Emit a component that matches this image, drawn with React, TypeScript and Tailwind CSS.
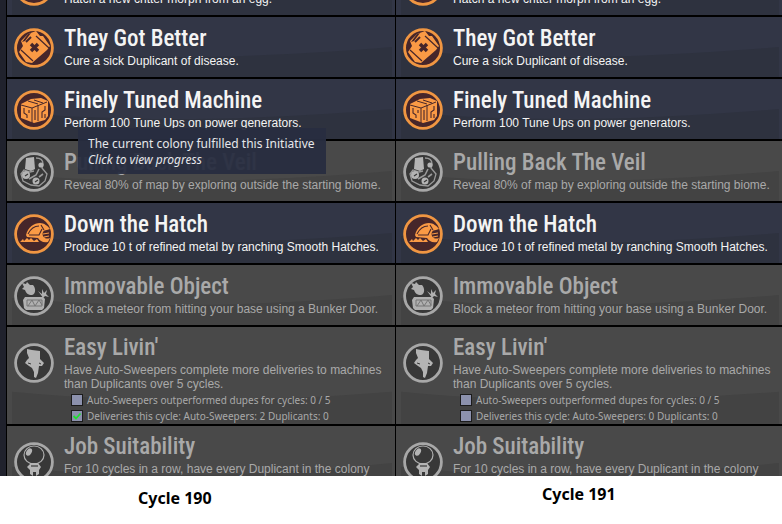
import { ReactNode } from "react";
import clsx from "clsx";

type Requirement = { label: string; done: boolean };

type Initiative = {
    id: string;
    title?: string;
    description: string;
    icon: ReactNode;
    achieved: boolean;
    tall?: boolean;
    requirements?: Requirement[];
};

const MedicineArt = () => (
    <>
        <path d="M5 24 L9 18 L7 13 L14 6 L22 3 L26 8 L29 8 L36 18 L33 22 L18 35 L12 34Z" fill="#fa9a45" />
        <path d="M8 14 L14 6 L17 5 L11 13Z" fill="#46262a" />
        <path d="M12 14 L17 9" stroke="#46262a" strokeWidth="2" />
        <path d="M7 22 L19 33 M22 8 L35 20" stroke="#46262a" strokeWidth="1.2" />
        <path d="M17 16 L24 23 M24 16 L17 23" stroke="#46262a" strokeWidth="3.4" />
    </>
);

const MachineArt = () => (
    <>
        <path d="M7 14 L17 9 L27 8 L34 11 L34 26 L31 30 L20 33 L7 28Z" fill="#fa9a45" />
        <path d="M7 15 L18 18 L33 12 M18 18 V33 M14 11 L24 14 M20 10 L29 13 M24 15 V31" stroke="#46262a" strokeWidth="1" fill="none" />
        <path d="M10 18 V23 L13 25 V28 M15 20 V23 M21 20 V30 M31 16 V20 L28 22 V28 M31 24 V28" stroke="#46262a" strokeWidth="1.1" fill="none" />
    </>
);

const MaskArt = () => (
    <>
        <path d="M12 6 L20 5 L21 17 L17 19 L11 17Z" fill="#b4b4b4" />
        <path d="M22 6 C26 6 29 8 29 12 L28 16 L33 22 L31 29 L25 34 L17 33 L9 29 L7 22 L10 18 L16 20 L20 19" stroke="#9a9a9a" strokeWidth="1.3" fill="none" />
        <circle cx="12" cy="23" r="4" fill="#b4b4b4" />
        <circle cx="22" cy="29" r="3.5" fill="#b4b4b4" />
        <circle cx="27" cy="13" r="2.6" fill="#b4b4b4" />
        <path d="M15 27 L22 23 L25 17 M25 25 L29 22" stroke="#9a9a9a" strokeWidth="1.6" fill="none" />
        <path d="M11 24 L14 22 M21 30 L24 28" stroke="#383838" strokeWidth="1.2" />
    </>
);

const HatchArt = () => (
    <>
        <path d="M12 21 C14 13 20 9 26 9 C30 9 34 12 36 15 L33 16 C29 16 28 19 29 22 C31 25 33 25 36 24 L34 28 C29 29 26 27 24 24 L13 23Z" fill="#fa9a45" />
        <path d="M14 20 C17 14 21 12 25 12 M15 21 H25 L28 15 M27 11 L30 16" stroke="#46262a" strokeWidth="1.1" fill="none" />
        <path d="M6 28 L9 25 L10 27 L13 24 L15 26 L17 24 L20 27 L23 25 L25 28Z" fill="#fa9a45" />
        <path d="M29 20 L35 19 M30 23 L35 22" stroke="#fa9a45" strokeWidth="1.1" />
    </>
);

const MeteorArt = () => (
    <>
        <path d="M8 7 L12 8 L13 6 L16 9 L19 9 C22 12 22 18 18 19 C14 19 12 17 11 14 L8 13 L10 11Z" fill="#b0b0b0" />
        <path d="M24 15 L28 18 L28 13 L30 17 L33 14 L32 18 L35 21 L31 20 L29 22 L27 19Z" fill="#b0b0b0" />
        <path d="M11 21 H29 L31 23 L30 32 L28 34 H12 L10 32 L9 24Z" fill="#b0b0b0" />
        <path d="M13 24 H28 V30 H13Z M14 30 L18 24 L21 30 L25 24 L28 29" stroke="#757575" strokeWidth="1" fill="none" />
    </>
);

const SweeperArt = () => (
    <>
        <path d="M13 6 L18 7 L26 8 L26 16 L30 20 L28 23 H25 L24 30 L22 35 L20 34 L20 29 L18 25 L15 23 L11 20 L13 17 L15 15 L13 10Z" fill="#b4b4b4" />
        <path d="M14 20 L17 21 M25 20 L27 21" stroke="#383838" strokeWidth="1" />
    </>
);

const AstronautArt = () => (
    <>
        <ellipse cx="20" cy="13" rx="10" ry="9" fill="#383838" stroke="#b0b0b0" strokeWidth="1.2" />
        <ellipse cx="15" cy="10" rx="2.6" ry="4" fill="#b4b4b4" transform="rotate(30 15 10)" />
        <path d="M17 21 H24 L27 25 L25 28 V32 L22 34 V30 H19 V34 L16 32 V28 L13 25Z" fill="#b4b4b4" />
        <path d="M17 24 H24" stroke="#383838" strokeWidth="1.2" />
    </>
);

const cycle190: Initiative[] = [
    { id: "morph", description: "Hatch a new critter morph from an egg.", icon: null, achieved: true },
    { id: "better", title: "They Got Better", description: "Cure a sick Duplicant of disease.", icon: <MedicineArt />, achieved: true },
    { id: "machine", title: "Finely Tuned Machine", description: "Perform 100 Tune Ups on power generators.", icon: <MachineArt />, achieved: true },
    { id: "veil", title: "Pulling Back The Veil", description: "Reveal 80% of map by exploring outside the starting biome.", icon: <MaskArt />, achieved: false },
    { id: "hatch", title: "Down the Hatch", description: "Produce 10 t of refined metal by ranching Smooth Hatches.", icon: <HatchArt />, achieved: true },
    { id: "object", title: "Immovable Object", description: "Block a meteor from hitting your base using a Bunker Door.", icon: <MeteorArt />, achieved: false },
    {
        id: "livin",
        title: "Easy Livin'",
        description: "Have Auto-Sweepers complete more deliveries to machines than Duplicants over 5 cycles.",
        icon: <SweeperArt />,
        achieved: false,
        tall: true,
        requirements: [
            { label: "Auto-Sweepers outperformed dupes for cycles: 0 / 5", done: false },
            { label: "Deliveries this cycle: Auto-Sweepers: 2 Duplicants: 0", done: true },
        ],
    },
    { id: "job", title: "Job Suitability", description: "For 10 cycles in a row, have every Duplicant in the colony", icon: <AstronautArt />, achieved: false, tall: true },
];

const cycle191: Initiative[] = cycle190.map((item) =>
    item.id === "livin"
        ? {
            ...item,
            requirements: [
                { label: "Auto-Sweepers outperformed dupes for cycles: 0 / 5", done: false },
                { label: "Deliveries this cycle: Auto-Sweepers: 0 Duplicants: 0", done: false },
            ],
        }
        : item
);

const Badge = ({ achieved, children }: { achieved: boolean; children: ReactNode }) => (
    <svg viewBox="0 0 40 40" className="size-10 shrink-0" aria-hidden="true">
        <circle cx="20" cy="20" r="18.5" fill={achieved ? "#46262a" : "#383838"} />
        {children}
        <circle cx="20" cy="20" r="18.4" fill="none" stroke={achieved ? "#f09642" : "#a8a8a8"} strokeWidth="2.8" />
    </svg>
);

const Tooltip = () => (
    <div role="tooltip" className="absolute left-[71px] top-[49px] z-10 w-[248px] bg-[#282d40]/95 px-[10px] pb-[6px] pt-2 font-['Noto_Sans',sans-serif] text-[12px] leading-4 text-[#e6e7ea]">
        <p>The current colony fulfilled this Initiative</p>
        <p className="italic">Click to view progress</p>
    </div>
);

const InitiativeRow = ({ item, tooltip }: { item: Initiative; tooltip?: boolean }) => (
    <li
        className={clsx(
            "relative flex shrink-0 items-start border-b-2 border-black pl-[7px]",
            item.requirements ? "h-[99px]" : item.tall ? "h-[76px]" : "h-[62px]",
            item.achieved ? "bg-[#323646] text-[#f4f4f4]" : "bg-[#494949] text-[#a9a9a9]"
        )}
    >
        <svg viewBox="0 0 380 60" preserveAspectRatio="none" className="absolute inset-y-0 left-[5px] h-full w-[calc(100%-8px)]" aria-hidden="true">
            <path d={item.requirements ? "M0 40 C130 48 260 46 380 40 V60 H0Z" : "M0 33 C130 45 260 40 380 30 V60 H0Z"} fill={item.achieved ? "#2e323f" : "#434343"} />
        </svg>
        <div className={clsx("relative", item.tall ? "pt-4" : "pt-[11px]")}>
            <Badge achieved={item.achieved}>{item.icon}</Badge>
        </div>
        <div className={clsx("relative flex h-full min-w-0 flex-1 flex-col pl-[10px]", item.tall ? "pt-[7px]" : "pt-2")}>
            {/* the name of the topmost entry is scrolled out of view */}
            <h2 className="h-7 whitespace-nowrap font-['Roboto_Condensed','Roboto',sans-serif] text-[23px] font-medium leading-7">{item.title}</h2>
            <p className="pt-px font-['Liberation_Sans',sans-serif] text-[12px] leading-[14px]">{item.description}</p>
            {item.requirements && (
                <ul className="pl-[7px] pt-px">
                    {item.requirements.map((req) => (
                        <li key={req.label}>
                            <label className="flex h-4 items-center gap-1 font-['Noto_Sans',sans-serif] text-[10px] leading-4">
                                <span className="relative flex size-3">
                                    <input type="checkbox" checked={req.done} readOnly className="size-3 appearance-none border border-[#1c1c1c] bg-[#8c91ad]" />
                                    {req.done && (
                                        <svg viewBox="0 0 12 12" className="absolute inset-0 size-3" aria-hidden="true">
                                            <path d="M2.5 6 L5 8.5 L9.5 3.5" stroke="#1fe02f" strokeWidth="1.8" fill="none" />
                                        </svg>
                                    )}
                                </span>
                                {req.label}
                            </label>
                        </li>
                    ))}
                </ul>
            )}
        </div>
        {tooltip && <Tooltip />}
    </li>
);

const InitiativeList = ({ items, hovered }: { items: Initiative[]; hovered?: string }) => (
    <ul className="-mt-[45px] flex flex-col">
        {items.map((item) => (
            <InitiativeRow key={item.id} item={item} tooltip={item.id === hovered} />
        ))}
    </ul>
);

const App = () => {
    return (
        <main className="flex h-screen bg-white">
            <figure className="flex min-w-0 flex-[396] flex-col">
                <div className="min-h-0 flex-1 overflow-hidden border-r border-black bg-[#20222d] pl-[6px]">
                    <div className="border-l border-black">
                        <InitiativeList items={cycle190} hovered="machine" />
                    </div>
                </div>
                <figcaption className="h-12 pl-[138px] pt-3 font-['Noto_Sans',sans-serif] text-[16px] font-bold leading-5 text-black">Cycle 190</figcaption>
            </figure>
            <figure className="flex min-w-0 flex-[386] flex-col">
                <div className="min-h-0 flex-1 overflow-hidden">
                    <InitiativeList items={cycle191} />
                </div>
                <figcaption className="h-12 pl-[146px] pt-2 font-['Noto_Sans',sans-serif] text-[16px] font-bold leading-5 text-black">Cycle 191</figcaption>
            </figure>
        </main>
    );
}

export default App;
